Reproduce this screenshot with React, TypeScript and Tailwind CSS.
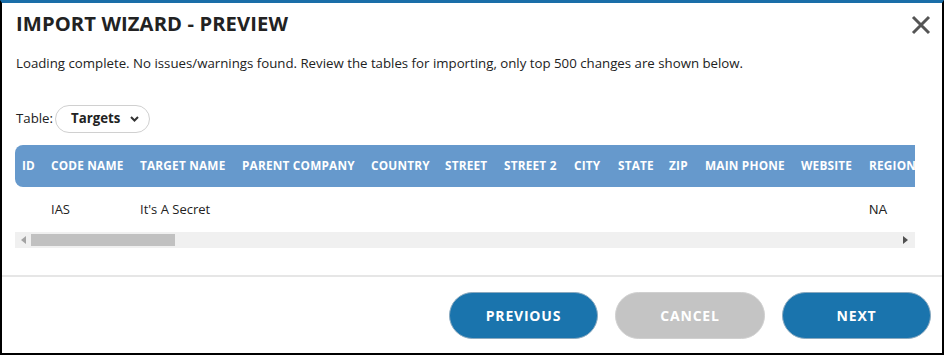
import React from "react";

const cols: { label: string; w: number; value?: string }[] = [
  { label: "ID", w: 29 },
  { label: "CODE NAME", w: 89, value: "IAS" },
  { label: "TARGET NAME", w: 102, value: "It's A Secret" },
  { label: "PARENT COMPANY", w: 129 },
  { label: "COUNTRY", w: 74 },
  { label: "STREET", w: 59 },
  { label: "STREET 2", w: 70 },
  { label: "CITY", w: 44 },
  { label: "STATE", w: 51 },
  { label: "ZIP", w: 36 },
  { label: "MAIN PHONE", w: 96 },
  { label: "WEBSITE", w: 68 },
  { label: "REGION", w: 90, value: "NA" },
];

export default function App() {
  return (
    <div
      className="w-[945px] h-[355px] bg-white"
      style={{ fontFamily: '"Open Sans", "Noto Sans", sans-serif' }}
    >
      <div className="w-[944px] h-[355px] border-l-2 border-r-2 border-b-2 border-black border-t-[3px] border-t-[#1a6ea8] flex flex-col">
        <div className="flex items-start justify-between pl-[14px] pr-[10px] pt-[5px] h-[40px]">
          <h1 className="text-[20.2px] font-bold text-[#222] tracking-[0.1px]">IMPORT WIZARD - PREVIEW</h1>
          <svg width="20" height="20" viewBox="0 0 20 20" className="mt-[7px] mr-[1px]">
            <path d="M2 2 L18 18 M18 2 L2 18" stroke="#555" strokeWidth="3" strokeLinecap="butt" />
          </svg>
        </div>
        <p className="pl-[14px] mt-[11px] text-[13.25px] text-[#222] leading-[18px]">
          Loading complete. No issues/warnings found. Review the tables for importing, only top 500 changes are shown below.
        </p>
        <div className="flex items-center pl-[14px] mt-[33px] h-[28px]">
          <span className="text-[13.25px] text-[#222]">Table:</span>
          <div className="ml-[2px] flex items-center h-[28px] w-[95px] rounded-full border border-[#d0d0d0] pl-[15px] pr-[10px] justify-between">
            <span className="text-[13.25px] font-bold text-[#222]">Targets</span>
            <svg width="9" height="6" viewBox="0 0 9 6">
              <path d="M1 1 L4.5 4.5 L8 1" stroke="#333" strokeWidth="2" fill="none" />
            </svg>
          </div>
        </div>
        <div className="ml-[13px] mt-[12px] w-[900px] overflow-hidden">
          <div className="flex h-[42px] bg-[#6699cc] rounded-l-[8px] w-max">
            {cols.map((c) => (
              <div
                key={c.label}
                style={{ width: c.w }}
                className="shrink-0 pl-[7px] flex items-center text-[11.8px] font-bold text-white whitespace-nowrap tracking-[0.2px]"
              >
                {c.label}
              </div>
            ))}
          </div>
          <div className="flex h-[45px] w-max">
            {cols.map((c) => (
              <div
                key={c.label}
                style={{ width: c.w }}
                className={
                  "shrink-0 pl-[7px] flex items-center text-[13px] text-[#222] whitespace-nowrap " +
                  (c.value === "NA" ? "font-['Liberation_Sans']" : "")
                }
              >
                {c.value ?? ""}
              </div>
            ))}
          </div>
          <div className="h-[16px] bg-[#f0f0f0] flex items-center relative">
            <svg width="5" height="8" viewBox="0 0 5 8" className="ml-[6px]">
              <path d="M5 0 L0 4 L5 8 Z" fill="#a3a3a3" />
            </svg>
            <div className="ml-[5px] h-[12px] w-[144px] bg-[#c1c1c1]" />
            <div className="flex-1" />
            <svg width="5" height="8" viewBox="0 0 5 8" className="mr-[7px]">
              <path d="M0 0 L5 4 L0 8 Z" fill="#505050" />
            </svg>
          </div>
        </div>
        <div className="mt-[27px] border-t-2 border-[#e6e6e6]" />
        <div className="flex justify-end gap-[17px] pr-[11px] mt-[15px]">
          <button className="w-[149px] h-[47px] rounded-full bg-[#1a74ad] border border-[#8aa9bf] text-white text-[14px] font-bold tracking-[0.8px]">
            PREVIOUS
          </button>
          <button className="w-[150px] h-[47px] rounded-full bg-[#c4c4c4] border border-[#d0d0d0] text-white text-[14px] font-bold tracking-[0.8px]">
            CANCEL
          </button>
          <button className="w-[149px] h-[47px] rounded-full bg-[#1a74ad] border border-[#8aa9bf] text-white text-[14px] font-bold tracking-[0.8px]">
            NEXT
          </button>
        </div>
      </div>
    </div>
  );
}
